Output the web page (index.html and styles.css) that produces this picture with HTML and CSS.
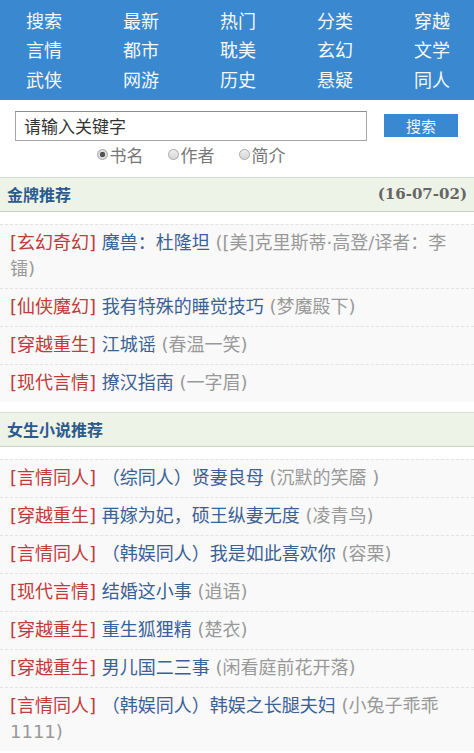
FILE: index.html
```html
<!DOCTYPE html>
<html lang="zh-CN">
<head>
<meta charset="utf-8">
<title>小说推荐</title>
<link rel="stylesheet" href="styles.css">
</head>
<body>
<nav class="nav">
  <a href="#">搜索</a><a href="#">最新</a><a href="#">热门</a><a href="#">分类</a><a href="#">穿越</a>
  <a href="#">言情</a><a href="#">都市</a><a href="#">耽美</a><a href="#">玄幻</a><a href="#">文学</a>
  <a href="#">武侠</a><a href="#">网游</a><a href="#">历史</a><a href="#">悬疑</a><a href="#">同人</a>
</nav>

<form class="search">
  <div class="search-left">
    <input class="search-input" type="text" placeholder="请输入关键字">
    <div class="radios">
      <label class="radio-opt"><span class="radio checked"></span>书名</label>
      <label class="radio-opt"><span class="radio"></span>作者</label>
      <label class="radio-opt"><span class="radio"></span>简介</label>
    </div>
  </div>
  <button class="search-btn" type="button">搜索</button>
</form>

<section class="sec">
  <h2 class="sec-head"><span class="sec-title">金牌推荐</span><span class="sec-date">(16-07-02)</span></h2>
  <ul class="list">
    <li><span class="cat">[玄幻奇幻]</span> <a class="title" href="#">魔兽：杜隆坦</a> <span class="author">([美]克里斯蒂·高登/译者：李镭)</span></li>
    <li><span class="cat">[仙侠魔幻]</span> <a class="title" href="#">我有特殊的睡觉技巧</a> <span class="author">(梦魔殿下)</span></li>
    <li><span class="cat">[穿越重生]</span> <a class="title" href="#">江城谣</a> <span class="author">(春温一笑)</span></li>
    <li><span class="cat">[现代言情]</span> <a class="title" href="#">撩汉指南</a> <span class="author">(一字眉)</span></li>
  </ul>
</section>

<section class="sec">
  <h2 class="sec-head"><span class="sec-title">女生小说推荐</span></h2>
  <ul class="list">
    <li><span class="cat">[言情同人]</span> <a class="title" href="#">（综同人）贤妻良母</a> <span class="author">(沉默的笑靥 )</span></li>
    <li><span class="cat">[穿越重生]</span> <a class="title" href="#">再嫁为妃，硕王纵妻无度</a> <span class="author">(凌青鸟)</span></li>
    <li><span class="cat">[言情同人]</span> <a class="title" href="#">（韩娱同人）我是如此喜欢你</a> <span class="author">(容栗)</span></li>
    <li><span class="cat">[现代言情]</span> <a class="title" href="#">结婚这小事</a> <span class="author">(逍语)</span></li>
    <li><span class="cat">[穿越重生]</span> <a class="title" href="#">重生狐狸精</a> <span class="author">(楚衣)</span></li>
    <li><span class="cat">[穿越重生]</span> <a class="title" href="#">男儿国二三事</a> <span class="author">(闲看庭前花开落)</span></li>
    <li><span class="cat">[言情同人]</span> <a class="title" href="#">（韩娱同人）韩娱之长腿夫妇</a> <span class="author">(小兔子乖乖1111)</span></li>
  </ul>
</section>
</body>
</html>
```

FILE: styles.css
```css
html, body {
  margin: 0;
  padding: 0;
  background: #fff;
  overflow: hidden;
}
body {
  font-family: "Noto Sans CJK SC", "Noto Sans", sans-serif;
  color: #333;
  width: 474px;
}
a { text-decoration: none; }

.nav {
  background: #3a88cf;
  display: grid;
  grid-template-columns: repeat(4, 97px) auto;
  grid-auto-rows: 29.33px;
  padding: 6px 0 6px 26px;
  font-size: 18px;
  line-height: 29.33px;
}
.nav a {
  color: #f6f8fb;
  white-space: nowrap;
}

.search {
  display: flex;
  align-items: flex-start;
  margin: 0;
  padding: 11px 0 12px;
}
.search-left {
  width: 352px;
  margin-left: 15px;
}
.search-input {
  display: block;
  box-sizing: border-box;
  width: 352px;
  height: 30px;
  margin: 0;
  padding: 0 8px;
  border: 1px solid #a6a6a6;
  border-top-color: #8e8e8e;
  font-family: inherit;
  font-size: 17px;
  color: #333;
  outline: none;
}
.search-input::placeholder { color: #333; }
.radios {
  display: flex;
  justify-content: center;
  gap: 24px;
  margin-top: 4px;
  font-size: 17px;
  line-height: 20px;
  color: #777;
}
.radio-opt {
  display: flex;
  align-items: center;
  gap: 2px;
}
.radio {
  display: inline-block;
  box-sizing: border-box;
  width: 11px;
  height: 11px;
  border-radius: 50%;
  border: 1px solid #a8a8a8;
  background: linear-gradient(#eeeeee, #d6d6d6);
}
.radio.checked {
  background: radial-gradient(circle, #555 0 2.5px, #dcdcdc 3px);
}
.search-btn {
  margin: 3px 0 0 17px;
  width: 74px;
  height: 23px;
  padding: 0;
  border: none;
  background: #3a88cf;
  color: #eef4fa;
  font-family: inherit;
  font-size: 15px;
  line-height: 23px;
}

.sec-head {
  margin: 0;
  height: 33px;
  line-height: 33px;
  padding: 0 7px;
  background: #eef3e8;
  border-top: 1px solid #d6dfd0;
  border-bottom: 1px solid #c8d1c3;
  display: flex;
  justify-content: space-between;
  font-size: 16px;
  font-weight: bold;
}
.sec-title { color: #2d5a8c; }
.sec-date {
  color: #666;
  font-family: "DejaVu Serif", serif;
  font-size: 15px;
}

.list {
  list-style: none;
  margin: 12px 0 10px;
  padding: 0;
  font-family: "DejaVu Sans", "Noto Sans CJK SC", sans-serif;
  font-size: 18px;
  line-height: 26px;
}
.list li {
  background: #f9f9f9;
  border-top: 1px dashed #e2e2e2;
  padding: 5px 10px 6px;
}
.cat { color: #c23a3a; }
.title { color: #3a6195; }
.author { color: #999; }
```
